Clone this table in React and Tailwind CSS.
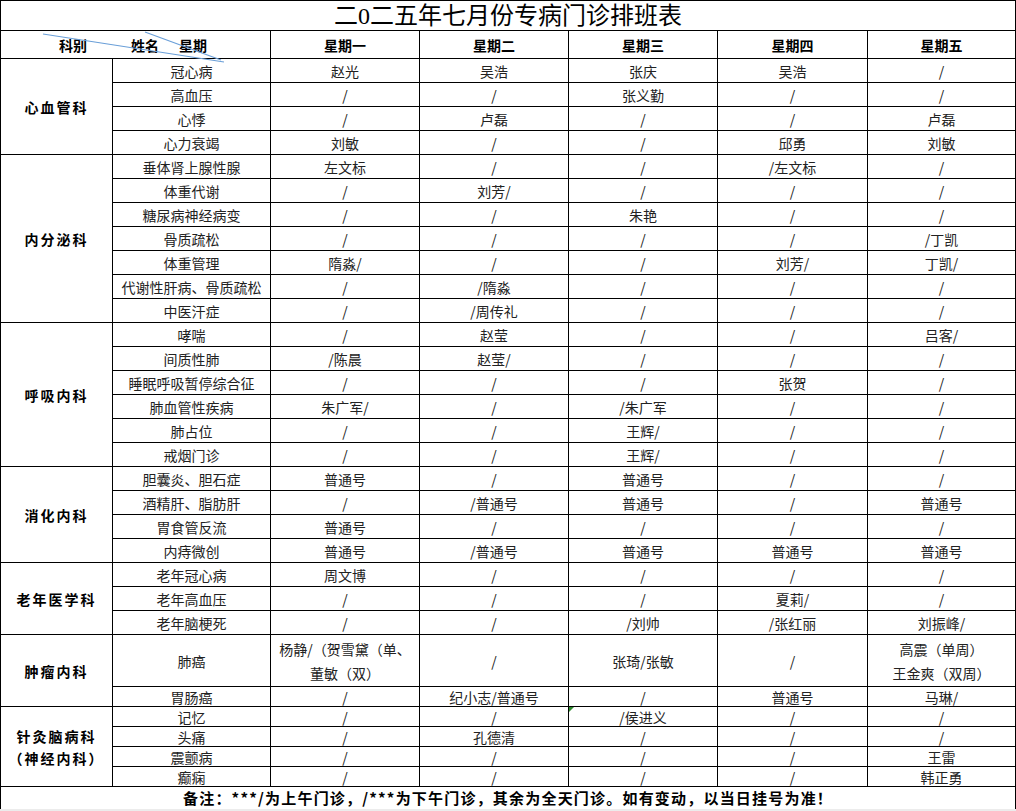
import React from 'react';

const groups = [
  {
    dept: ['心血管科'],
    rows: [
      ['冠心病', '赵光', '吴浩', '张庆', '吴浩', '/'],
      ['高血压', '/', '/', '张义勤', '/', '/'],
      ['心悸', '/', '卢磊', '/', '/', '卢磊'],
      ['心力衰竭', '刘敏', '/', '/', '邱勇', '刘敏'],
    ],
  },
  {
    dept: ['内分泌科'],
    rows: [
      ['垂体肾上腺性腺', '左文标', '/', '/', '/左文标', '/'],
      ['体重代谢', '/', '刘芳/', '/', '/', '/'],
      ['糖尿病神经病变', '/', '/', '朱艳', '/', '/'],
      ['骨质疏松', '/', '/', '/', '/', '/丁凯'],
      ['体重管理', '隋淼/', '/', '/', '刘芳/', '丁凯/'],
      ['代谢性肝病、骨质疏松', '/', '/隋淼', '/', '/', '/'],
      ['中医汗症', '/', '/周传礼', '/', '/', '/'],
    ],
  },
  {
    dept: ['呼吸内科'],
    rows: [
      ['哮喘', '/', '赵莹', '/', '/', '吕客/'],
      ['间质性肺', '/陈晨', '赵莹/', '/', '/', '/'],
      ['睡眠呼吸暂停综合征', '/', '/', '/', '张贺', '/'],
      ['肺血管性疾病', '朱广军/', '/', '/朱广军', '/', '/'],
      ['肺占位', '/', '/', '王辉/', '/', '/'],
      ['戒烟门诊', '/', '/', '王辉/', '/', '/'],
    ],
  },
  {
    dept: ['消化内科'],
    rows: [
      ['胆囊炎、胆石症', '普通号', '/', '普通号', '/', '/'],
      ['酒精肝、脂肪肝', '/', '/普通号', '普通号', '/', '普通号'],
      ['胃食管反流', '普通号', '/', '/', '/', '/'],
      ['内痔微创', '普通号', '/普通号', '普通号', '普通号', '普通号'],
    ],
  },
  {
    dept: ['老年医学科'],
    rows: [
      ['老年冠心病', '周文博', '/', '/', '/', '/'],
      ['老年高血压', '/', '/', '/', '夏莉/', '/'],
      ['老年脑梗死', '/', '/', '/刘帅', '/张红丽', '刘振峰/'],
    ],
  },
  {
    dept: ['肿瘤内科'],
    rows: [
      ['肺癌', ['杨静/（贺雪黛（单、', '董敏（双）'], '/', '张琦/张敏', '/', ['高震（单周）', '王金爽（双周）']],
      ['胃肠癌', '/', '纪小志/普通号', '/', '普通号', '马琳/'],
    ],
    heights: ['h-[52px]', 'h-[20px]'],
  },
  {
    dept: ['针灸脑病科', '（神经内科）'],
    rows: [
      ['记忆', '/', '/', '/侯进义', '/', '/'],
      ['头痛', '/', '孔德清', '/', '/', '/'],
      ['震颤病', '/', '/', '/', '/', '王雷'],
      ['癫痫', '/', '/', '/', '/', '韩正勇'],
    ],
    small: true,
  },
];

const days = ['星期一', '星期二', '星期三', '星期四', '星期五'];

function Cell({ value, mark }) {
  return (
    <td className="relative border border-black p-0 text-center align-middle text-[14px] leading-[18px] text-[#222]">
      {mark && (
        <span className="absolute left-0 top-0 h-0 w-0 border-r-[5px] border-t-[5px] border-r-transparent border-t-[#2e8b2e]" />
      )}
      {Array.isArray(value) ? (
        <div className="leading-[24px]">
          {value.map((line) => (
            <div key={line}>{line}</div>
          ))}
        </div>
      ) : (
        value
      )}
    </td>
  );
}

export default function App() {
  return (
    <div className="w-[1016px] bg-white" style={{ fontFamily: '"Noto Sans CJK SC", "Noto Sans", sans-serif' }}>
      <table className="w-[1015px] table-fixed border-collapse">
        <colgroup>
          <col className="w-[112px]" />
          <col className="w-[158px]" />
          <col className="w-[149px]" />
          <col className="w-[149px]" />
          <col className="w-[149px]" />
          <col className="w-[150px]" />
          <col className="w-[148px]" />
        </colgroup>
        <tbody>
          <tr className="h-[30px]">
            <td
              colSpan={7}
              className="border border-black p-0 text-center text-[24px] leading-[26px] text-black"
              style={{ fontFamily: '"Liberation Serif", "Noto Sans CJK SC", serif' }}
            >
              二0二五年七月份专病门诊排班表
            </td>
          </tr>
          <tr className="h-[28px]">
            <td colSpan={2} className="relative border border-black p-0 text-[14px] font-bold leading-[18px] text-black">
              <div className="flex items-center pl-[58px]">
                <span>科别</span>
                <span className="ml-[44px]">姓名</span>
                <span className="ml-[20px]">星期</span>
              </div>
              <svg className="pointer-events-none absolute left-0 top-0 overflow-visible" width="270" height="28">
                <line x1="42" y1="3" x2="223" y2="31" stroke="#6a9fd8" strokeWidth="1.2" />
                <line x1="144" y1="1" x2="220" y2="29" stroke="#6a9fd8" strokeWidth="1.2" />
              </svg>
            </td>
            {days.map((d) => (
              <td key={d} className="border border-black p-0 text-center text-[14px] font-bold leading-[18px] text-black">
                {d}
              </td>
            ))}
          </tr>
          {groups.map((g) =>
            g.rows.map((r, i) => (
              <tr
                key={r[0]}
                className={g.heights ? g.heights[i] : g.small ? 'h-[20px]' : 'h-[24px]'}
              >
                {i === 0 && (
                  <td
                    rowSpan={g.rows.length}
                    className="border border-black p-0 text-center align-middle text-[14px] font-bold leading-[22px] tracking-[2px] text-black"
                  >
                    {g.dept.map((line) => (
                      <div key={line}>{line}</div>
                    ))}
                  </td>
                )}
                {r.map((v, j) => (
                  <Cell key={j} value={v} mark={r[0] === '记忆' && j === 3} />
                ))}
              </tr>
            ))
          )}
          <tr className="h-[22px]">
            <td
              colSpan={7}
              className="border-x border-t border-black p-0 text-center text-[15px] font-bold leading-[20px] tracking-[1.2px] text-black"
            >
              备注：***/为上午门诊，/***为下午门诊，其余为全天门诊。如有变动，以当日挂号为准！
            </td>
          </tr>
        </tbody>
      </table>
      <div className="h-[3px] w-[1016px] bg-[#ececec]" />
    </div>
  );
}
